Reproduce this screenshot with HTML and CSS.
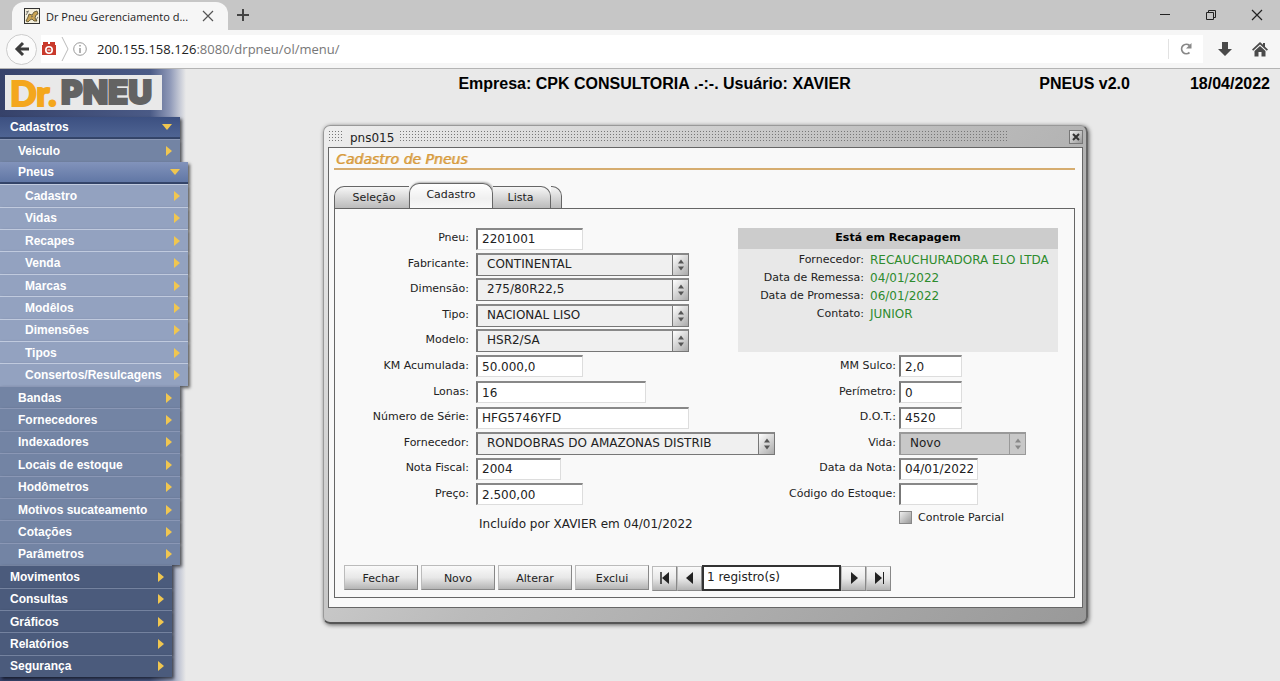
FILE: index.html
```html
<!DOCTYPE html>
<html lang="pt-BR">
<head>
	<meta charset="UTF-8">
	<meta name="viewport" content="width=device-width, initial-scale=1.0">
	<title>Dr Pneu Gerenciamento de Pneus</title>
	<link rel="stylesheet" href="styles.css">
</head>
<body>

	<!-- browser -->
	<div class="tab-strip">
		<div class="browser-tab">
			<svg class="favicon" width="16" height="16" viewBox="0 0 16 16">
				<rect x=".5" y=".5" width="15" height="15" fill="#f4efdc" stroke="#333"/>
				<path d="M2 13l2-4 1-3 3 1 2-3 3-1 1 3-2 1-1 3 2 3h-3l-2-2-2 1-2 2z" fill="#c9a455" stroke="#51472b" stroke-width=".8"/>
				<path d="M2 4l3-1M2 7l2-3M12 12l2-3M7 9l2-1" stroke="#555" stroke-width=".8"/>
			</svg>
			<span class="tab-title">Dr Pneu Gerenciamento d...</span>
			<button class="plain" aria-label="Fechar aba"><svg width="12" height="12" viewBox="0 0 12 12"><path d="M1 1l10 10M11 1L1 11" stroke="#555" stroke-width="1.2"/></svg></button>
		</div>
		<button class="plain new-tab" aria-label="Nova aba"><svg width="14" height="14" viewBox="0 0 14 14"><path d="M7 1v12M1 7h12" stroke="#444" stroke-width="2"/></svg></button>
		<div class="win-buttons">
			<button class="plain" aria-label="Minimizar"><svg width="12" height="12" viewBox="0 0 12 12"><path d="M1 5.500h10" stroke="#222"/></svg></button>
			<button class="plain" aria-label="Restaurar"><svg width="12" height="12" viewBox="0 0 12 12"><path d="M1.500 3.500h7v7h-7zM3.500 3.500v-2h7v7h-2" fill="none" stroke="#222"/></svg></button>
			<button class="plain" aria-label="Fechar"><svg width="12" height="12" viewBox="0 0 12 12"><path d="M1 1l10 10M11 1L1 11" stroke="#222" stroke-width="1.200"/></svg></button>
		</div>
	</div>
	<div class="toolbar">
		<button class="plain back" aria-label="Voltar"><svg width="16" height="16" viewBox="0 0 16 16"><path d="M9 2L3 8l6 6M3 8h12" fill="none" stroke="#3c3c3c" stroke-width="3"/></svg></button>
		<div class="url-bar">
			<svg width="16" height="16" viewBox="0 0 16 16"><path d="M1 4h1V1h5v2h2V1h5v3h1v10H1z" fill="#c93a2c"/><circle cx="8" cy="9" r="4" fill="#fff"/><circle cx="8" cy="9" r="2.400" fill="#c93a2c"/><path d="M6.500 9h3" stroke="#fff"/></svg>
			<svg width="8" height="26" viewBox="0 0 8 26"><path d="M1 1l6 12-6 12" fill="none" stroke="#bbb"/></svg>
			<svg width="14" height="14" viewBox="0 0 14 14"><circle cx="7" cy="7" r="6.300" fill="none" stroke="#999"/><path d="M7 6v5M7 3v1.500" stroke="#888" stroke-width="1.300"/></svg>
			<span class="address"><b>200.155.158.126</b>:8080/drpneu/ol/menu/</span>
			<button class="plain reload" aria-label="Recarregar"><svg width="14" height="14" viewBox="0 0 14 14"><path d="M10.500 10.500a4.700 4.700 0 1 1 0-7" fill="none" stroke="#888" stroke-width="1.800"/><path d="M12.500 1v5.500H7z" fill="#888"/></svg></button>
		</div>
		<button class="plain" aria-label="Downloads"><svg width="14" height="16" viewBox="0 0 14 16"><path d="M4 1h6v7h4l-7 7-7-7h4z" fill="#4a4a4a"/></svg></button>
		<button class="plain" aria-label="Início"><svg width="16" height="16" viewBox="0 0 16 16"><path d="M0 8.500L8 1l3 2.800V2h2v3.700l3 2.800-1.200 1.200L8 3.500 1.200 9.700z" fill="#4a4a4a"/><path d="M2.500 10L8 5l5.500 5v5.500H9.500V11h-3v4.500h-4z" fill="#4a4a4a"/></svg></button>
	</div>

	<div class="app">
		<!-- menu -->
		<nav class="sidebar">
			<a class="logo" href="#"><span class="logo-dr">Dr.</span><span class="logo-pneu">PNEU</span></a>
			<ul class="menu">
				<li><a class="level2 open" href="#">Cadastros</a></li>
				<li><a class="level2 sub" href="#">Veiculo</a></li>
				<li><a class="level3 open sub" href="#">Pneus</a></li>
				<li><a class="level3" href="#">Cadastro</a></li>
				<li><a class="level3" href="#">Vidas</a></li>
				<li><a class="level3" href="#">Recapes</a></li>
				<li><a class="level3" href="#">Venda</a></li>
				<li><a class="level3" href="#">Marcas</a></li>
				<li><a class="level3" href="#">Modêlos</a></li>
				<li><a class="level3" href="#">Dimensões</a></li>
				<li><a class="level3" href="#">Tipos</a></li>
				<li><a class="level3" href="#">Consertos/Resulcagens</a></li>
				<li><a class="level2 sub" href="#">Bandas</a></li>
				<li><a class="level2 sub" href="#">Fornecedores</a></li>
				<li><a class="level2 sub" href="#">Indexadores</a></li>
				<li><a class="level2 sub" href="#">Locais de estoque</a></li>
				<li><a class="level2 sub" href="#">Hodômetros</a></li>
				<li><a class="level2 sub" href="#">Motivos sucateamento</a></li>
				<li><a class="level2 sub" href="#">Cotações</a></li>
				<li><a class="level2 sub" href="#">Parâmetros</a></li>
				<li><a class="level1" href="#">Movimentos</a></li>
				<li><a class="level1" href="#">Consultas</a></li>
				<li><a class="level1" href="#">Gráficos</a></li>
				<li><a class="level1" href="#">Relatórios</a></li>
				<li><a class="level1" href="#">Segurança</a></li>
			</ul>
		</nav>

		<main class="main">
			<header class="info">
				<span class="company">Empresa: CPK CONSULTORIA .-:-. Usuário: XAVIER</span>
				<span>PNEUS v2.0</span>
				<span>18/04/2022</span>
			</header>

			<!-- janela pns015 -->
			<section class="window">
				<div class="title-bar">
					<span class="dots short"></span>
					<span class="window-name">pns015</span>
					<span class="dots long"></span>
					<button class="close" aria-label="Fechar janela"><svg width="8" height="8" viewBox="0 0 8 8"><path d="M1 1l6 6M7 1L1 7" stroke="#333" stroke-width="2"/></svg></button>
				</div>
				<div class="window-body">
					<h1>Cadastro de Pneus</h1>
					<div class="tabs">
						<button class="tab first">Seleção</button>
						<button class="tab active">Cadastro</button>
						<button class="tab last">Lista</button>
						<span class="tab-end"></span>
					</div>
					<form class="panel">
						<div class="fields">
							<div class="column left">
								<label for="pneu">Pneu:</label><input id="pneu" type="text" class="w-mid" value="2201001">
								<label for="fabricante">Fabricante:</label><select id="fabricante" class="w-big"><option>CONTINENTAL</option></select>
								<label for="dimensao">Dimensão:</label><select id="dimensao" class="w-big"><option>275/80R22,5</option></select>
								<label for="tipo">Tipo:</label><select id="tipo" class="w-big"><option>NACIONAL LISO</option></select>
								<label for="modelo">Modelo:</label><select id="modelo" class="w-big"><option>HSR2/SA</option></select>
								<label for="km">KM Acumulada:</label><input id="km" type="text" class="w-mid" value="50.000,0">
								<label for="lonas">Lonas:</label><input id="lonas" type="text" class="w-lonas" value="16">
								<label for="serie">Número de Série:</label><input id="serie" type="text" class="w-big" value="HFG5746YFD">
								<label for="fornecedor">Fornecedor:</label><select id="fornecedor" class="w-full"><option>RONDOBRAS DO AMAZONAS DISTRIB</option></select>
								<label for="nota">Nota Fiscal:</label><input id="nota" type="text" class="w-nota" value="2004">
								<label for="preco">Preço:</label><input id="preco" type="text" class="w-mid" value="2.500,00">
							</div>
							<div class="column right">
								<div class="status">
									<table>
										<thead><tr><th colspan="2">Está em Recapagem</th></tr></thead>
										<tbody>
											<tr><td>Fornecedor:</td><td>RECAUCHURADORA ELO LTDA</td></tr>
											<tr><td>Data de Remessa:</td><td>04/01/2022</td></tr>
											<tr><td>Data de Promessa:</td><td>06/01/2022</td></tr>
											<tr><td>Contato:</td><td>JUNIOR</td></tr>
										</tbody>
									</table>
								</div>
								<label for="sulco">MM Sulco:</label><input id="sulco" type="text" class="w-small" value="2,0">
								<label for="perimetro">Perímetro:</label><input id="perimetro" type="text" class="w-small" value="0">
								<label for="dot">D.O.T.:</label><input id="dot" type="text" class="w-small" value="4520">
								<label for="vida">Vida:</label><select id="vida" class="w-vida" disabled><option>Novo</option></select>
								<label for="data">Data da Nota:</label><input id="data" type="text" class="w-date" value="04/01/2022">
								<label for="estoque">Código do Estoque:</label><input id="estoque" type="text" class="w-date" value="">
							</div>
						</div>
						<div class="extra">
							<p>Incluído por XAVIER em 04/01/2022</p>
							<label class="check"><input type="checkbox">Controle Parcial</label>
						</div>
						<div class="actions">
							<button type="button">Fechar</button>
							<button type="button">Novo</button>
							<button type="button">Alterar</button>
							<button type="button">Exclui</button>
							<div class="pager">
								<button type="button" aria-label="Primeiro"><svg width="12" height="14" viewBox="0 0 12 14"><path d="M2 1v12" stroke="#222" stroke-width="1.500"/><path d="M10 1v12L3 7z" fill="#222"/></svg></button>
								<button type="button" aria-label="Anterior"><svg width="12" height="14" viewBox="0 0 12 14"><path d="M9 1v12L2 7z" fill="#222"/></svg></button>
								<input type="text" aria-label="Registros" value="1 registro(s)">
								<button type="button" aria-label="Próximo"><svg width="12" height="14" viewBox="0 0 12 14"><path d="M3 1v12l7-6z" fill="#222"/></svg></button>
								<button type="button" aria-label="Último"><svg width="12" height="14" viewBox="0 0 12 14"><path d="M10.500 1v12" stroke="#222"/><path d="M2 1v12l7-6z" fill="#222"/></svg></button>
							</div>
						</div>
					</form>
				</div>
			</section>
		</main>
	</div>

</body>
</html>
```
FILE: styles.css
```css
* {box-sizing: border-box; }
body {margin: 0; min-height: 100vh; display: flex; flex-direction: column; background: #e9e9e9; font-family: "DejaVu Sans", Verdana, sans-serif; font-size: 11px; color: #222; }
button, input, select {font: inherit; color: inherit; }
svg {display: block; flex: none; }
.plain {border: 0; padding: 0; background: none; }

/* browser */
.tab-strip {display: flex; align-items: center; height: 30px; background: #c6c6c6; font-family: "Open Sans", sans-serif; }
.browser-tab {display: flex; align-items: center; align-self: flex-end; width: 216px; height: 28px; margin-left: 12px; padding: 0 14px 0 12px; gap: 6px; background: #f6f6f6; border-radius: 12px 12px 0 0; }
.tab-title {flex: 1; font-size: 11px; white-space: nowrap; }
.new-tab {margin-left: 8px; }
.win-buttons {display: flex; gap: 34px; margin-left: auto; margin-right: 17px; }
.toolbar {display: flex; align-items: center; height: 39px; gap: 20px; padding: 0 12px 0 6px; background: #f6f6f6; border-bottom: 1px solid #b4b4b4; }
.back {display: flex; align-items: center; justify-content: center; width: 31px; height: 31px; margin-right: -16px; border: 1px solid #ccc; border-radius: 50%; background: #fbfbfb; }
.url-bar {flex: 1; display: flex; align-items: center; height: 28px; gap: 4px; background: #fff; margin-right: -5px; }
.address {flex: 1; margin-left: 6px; font-family: "Open Sans", sans-serif; font-size: 13px; color: #777; }
.address b {font-weight: normal; color: #222; }
.reload {height: 20px; padding: 0 10px; border-left: 1px solid #e2e2e2; }

/* menu */
.app {flex: 1; display: flex; }
.sidebar {flex: none; display: flex; flex-direction: column; width: 188px; padding: 6px 0 4px; background: linear-gradient(90deg, #36426a 0, #4a5a86 150px, #8f99b8 170px, #e9e9e9 186px); }
.logo {display: flex; align-items: center; width: 157px; height: 35px; margin: 0 0 7px 5px; padding: 0 5px; background: #e9e9e9; text-decoration: none; line-height: 35px; }
.logo-dr {width: 51px; font-family: Lato, sans-serif; font-weight: 900; font-size: 35px; color: #f4a71d; -webkit-text-stroke: 2px #f4a71d; }
.logo-pneu {font-family: Inter, sans-serif; font-weight: 900; font-size: 33px; color: #636363; -webkit-text-stroke: 2px #636363; }
.menu {flex: 1; display: flex; flex-direction: column; margin: 0; padding: 0; list-style: none; }
.menu li {flex: 1; display: flex; }
.menu a {display: flex; align-items: center; justify-content: space-between; padding: 0 8px 0 10px; border-top: 1px solid #8a97b5; box-shadow: 2px 2px 3px rgba(0,0,0,0.6); color: #fff; font: bold 12px/14px "Liberation Sans", Arial, sans-serif; text-decoration: none; }
.menu a::after {content: ""; border: 5px solid transparent; border-left: 6px solid #f0c650; border-right: 0; }
.menu .level1 {width: 172px; background: #4b5b7c; border-top-color: #74829f; }
.menu .level2 {width: 180px; background: #7384a4; }
.menu .level3 {width: 188px; background: #93a2c0; border-top-color: #c0cade; padding-left: 25px; }
.menu .sub {padding-left: 18px; }
.menu .open {border-top: 0; border-bottom: 2px solid #35466b; background: linear-gradient(#3c5081, #4f6493); }
.menu .open.sub {background: linear-gradient(#8293bb, #6177a5); }
.menu .open::after {border: 5px solid transparent; border-top: 6px solid #f0c650; border-bottom: 0; }

/* main */
.main {flex: 1; min-width: 0; }
.info {display: flex; justify-content: flex-end; gap: 60px; padding: 5px 10px 0 0; font: bold 16px/20px "Liberation Sans", Arial, sans-serif; color: #000; }
.company {flex: 1; text-align: center; padding-left: 142px; }

.window {max-width: 765px; margin: 31px 20px 30px 135px; padding: 0 3px 14px 4px; border: 1px solid #999; border-right: 2px solid #666; border-bottom: 2px solid #555; border-radius: 7px; background: linear-gradient(135deg, #eee, #bbb 50%, #999); box-shadow: 1px 1px 4px rgba(0,0,0,0.6); }
.title-bar {display: flex; align-items: center; height: 21px; }
.dots {height: 13px; background: radial-gradient(circle, #777 0, #777 1px, transparent 1px) 0 0 / 3px 3px; }
.dots.short {width: 16px; }
.dots.long {flex: 1; margin-right: 61px; }
.window-name {padding: 2px 5px 0 6px; font-size: 12px; }
.close {display: flex; align-items: center; justify-content: center; width: 14px; height: 14px; padding: 0; border: 1px solid #777; background: linear-gradient(135deg, #eee, #999); }
.window-body {padding: 2px 7px 9px 5px; border: 1px solid #666; background: #f9f9f9; }
h1 {margin: 0 0 13px; padding: 0 2px; border-bottom: 2px solid #d6ad70; font-size: 14px; line-height: 18px; font-weight: normal; font-style: italic; color: #d79a3c; text-shadow: 1px 0 #e4bd80; }

.tabs {display: flex; align-items: flex-end; height: 25px; }
.tab, .tab-end {height: 22px; border: 1px solid #666; border-bottom: 0; border-radius: 0 10px 0 0; background: linear-gradient(#f6f6f6, #bbb); }
.tab.first {width: 75px; padding: 0 0 0 4px; border-right: 0; border-radius: 10px 0 0 0; }
.tab.active {width: 84px; height: 25px; padding: 0 0 4px; border-radius: 10px 10px 0 0; background: linear-gradient(#fff, #f0f0f0 60%, #f9f9f9); box-shadow: 1px -1px 2px rgba(0,0,0,0.3); }
.tab.last {width: 58px; padding: 0 2px 0 0; border-left: 0; }
.tab-end {width: 11px; border-left: 0; }

/* form */
.panel {padding: 17px 16px 6px 9px; border: 1px solid #666; }
.fields {display: flex; min-height: 281px; }
.column {display: grid; align-items: center; }
.column label {text-align: right; white-space: nowrap; padding-bottom: 2px; }
.left {flex: 1; min-width: 0; grid-template: repeat(11, 1fr) / 125px minmax(0, 1fr); column-gap: 7px; }
.right {flex: none; width: 320px; grid-template: repeat(11, 1fr) / 158px 1fr; column-gap: 3px; }
input[type="text"], select {font-size: 12px; }
input[type="text"] {height: 22px; padding: 0 4px; border: 1px solid #ddd; border-top: 2px solid #888; border-left: 2px solid #777; background: #fff; }
select {height: 23px; padding: 0 18px 2px 9px; border: 1px solid #777; border-top: 2px solid #888; border-left: 2px solid #777; border-radius: 0; appearance: none;
	background:
		url("data:image/svg+xml,%3Csvg xmlns='http://www.w3.org/2000/svg' width='14' height='14'%3E%3Cpath d='M4 5.500l3-4 3 4zM4 8.500l3 4 3-4z' fill='%23555'/%3E%3C/svg%3E") no-repeat right 0 center,
		linear-gradient(#777, #777) no-repeat right 15px top / 1px 100%,
		linear-gradient(135deg, #fff, #aaa) no-repeat right / 15px 100%,
		#f0f0f0;
}
select:disabled {opacity: 1; color: #222; border-color: #999;
	background:
		url("data:image/svg+xml,%3Csvg xmlns='http://www.w3.org/2000/svg' width='14' height='14'%3E%3Cpath d='M4 5.500l3-4 3 4zM4 8.500l3 4 3-4z' fill='%23888'/%3E%3C/svg%3E") no-repeat right 0 center,
		linear-gradient(#999, #999) no-repeat right 15px top / 1px 100%,
		#c8c8c8;
}
.w-small {width: 63px; }
.w-date {width: 79px; }
.w-nota {width: 85px; }
.w-mid {width: 107px; }
.w-vida {width: 127px; }
.w-lonas {width: 170px; }
.w-big {width: 213px; }
.w-full {width: 299px; }

.status {grid-area: 1 / 1 / 6 / 3; align-self: stretch; margin: 2px 0; background: #e8e8e8; }
.status table {width: 100%; border-collapse: collapse; line-height: 18px; }
.status th {height: 21px; padding: 0 0 2px; background: #ccc; color: #000; }
.status td {padding: 0 0 0 6px; color: #2e8b2e; font-size: 12px; white-space: nowrap; }
.status td:first-child {width: 126px; padding: 0; text-align: right; color: #222; font-size: 11px; }
.status tbody::before {content: ""; display: table-row; height: 2px; }

.extra {display: flex; align-items: flex-start; height: 58px; }
.extra p {flex: 1; margin: 10px 0 0 135px; font-size: 12px; }
.check {display: flex; align-items: center; width: 159px; margin-top: 4px; }
.check input {width: 13px; height: 13px; margin: 0 6px 0 0; border: 1px solid #888; appearance: none; background: linear-gradient(135deg, #eee, #999); }

.actions {display: flex; gap: 3px; }
.actions button {width: 74px; height: 25px; padding: 2px 0 0; border: 1px solid #bbb; border-right-color: #888; border-bottom-color: #888; background: linear-gradient(#fafafa, #e8e8e8 50%, #b4b4b4); }
.pager {display: flex; align-items: center; }
.pager button {display: flex; align-items: center; justify-content: center; width: 25px; padding: 0; }
.pager input[type="text"] {width: 139px; height: 26px; padding: 0 3px 3px; border: 2px solid #333; }
```
